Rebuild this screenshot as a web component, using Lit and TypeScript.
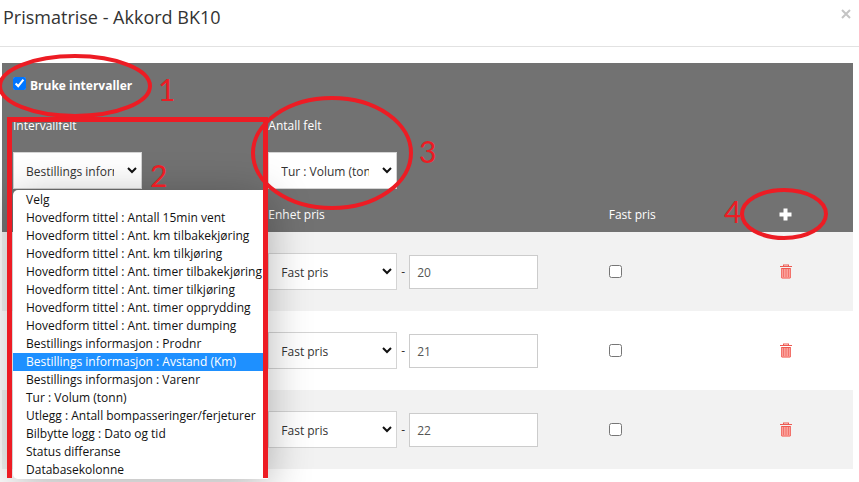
import { LitElement, html, css, svg } from "lit";
import { customElement, property, state } from "lit/decorators.js";

const FIELD_OPTIONS = [
  "Velg",
  "Hovedform tittel : Antall 15min vent",
  "Hovedform tittel : Ant. km tilbakekjøring",
  "Hovedform tittel : Ant. km tilkjøring",
  "Hovedform tittel : Ant. timer tilbakekjøring",
  "Hovedform tittel : Ant. timer tilkjøring",
  "Hovedform tittel : Ant. timer opprydding",
  "Hovedform tittel : Ant. timer dumping",
  "Bestillings informasjon : Prodnr",
  "Bestillings informasjon : Avstand (Km)",
  "Bestillings informasjon : Varenr",
  "Tur : Volum (tonn)",
  "Utlegg : Antall bompasseringer/ferjeturer",
  "Bilbytte logg : Dato og tid",
  "Status differanse",
  "Databasekolonne",
];

@customElement("price-select")
class PriceSelect extends LitElement {
  @property({ type: Array }) options: string[] = [];
  @property() value = "";
  @property() label = "";

  static styles = css`
    :host {
      display: inline-block;
      position: relative;
      width: 129px;
      vertical-align: top;
    }
    .select {
      display: block;
      box-sizing: border-box;
      width: 100%;
      height: 37px;
      margin: 0;
      padding: 2px 27px 0 12px;
      border: 1px solid #d4d4d4;
      border-radius: 0;
      background: #fff;
      color: #333;
      font: inherit;
      appearance: none;
    }
    .chevron {
      position: absolute;
      right: 5px;
      top: 14px;
      width: 10px;
      height: 8px;
      pointer-events: none;
    }
  `;

  render() {
    return html`
      <select class="select" aria-label=${this.label}>
        ${this.options.map(
          (o) => html`<option ?selected=${o === this.value}>${o}</option>`
        )}
      </select>
      <svg class="chevron" viewBox="0 0 10 8" aria-hidden="true">
        <path d="M1 2 L5 6 L9 2" fill="none" stroke="#111" stroke-width="2" />
      </svg>
    `;
  }
}

@customElement("tutorial-marks")
class TutorialMarks extends LitElement {
  static styles = css`
    :host {
      position: absolute;
      z-index: 2;
      left: 0;
      top: 0;
      pointer-events: none;
    }
    .marks {
      display: block;
      overflow: visible;
    }
    .line {
      fill: none;
      stroke: #ed1c24;
      stroke-width: 4;
    }
    .frame {
      stroke-width: 5;
    }
    .digit {
      fill: #ed1c24;
      font: 30px Lato, sans-serif;
    }
  `;

  render() {
    const ellipses = [
      [75, 86, 75, 30],
      [332, 153, 79, 55],
      [784, 214, 42, 24],
    ];
    const digits: [string, number, number][] = [
      ["1", 158, 101],
      ["2", 150, 187],
      ["3", 419, 163],
      ["4", 724, 223],
    ];
    return html`
      <svg class="marks" width="1" height="1">
        <path class="line frame" d="M9.5 478 V119.5 H265.5 V478" />
        ${ellipses.map(
          ([x, y, rx, ry]) =>
            svg`<ellipse class="line" cx=${x} cy=${y} rx=${rx} ry=${ry} />`
        )}
        ${digits.map(
          ([d, x, y]) => svg`<text class="digit" x=${x} y=${y}>${d}</text>`
        )}
      </svg>
    `;
  }
}

@customElement("app-root")
class AppRoot extends LitElement {
  @state() private rows = ["20", "21", "22"];

  static styles = css`
    :host {
      display: block;
      position: relative;
      height: 100vh;
      overflow: hidden;
      background: #fff;
      color: #333;
      font: 12px/18px "Open Sans", "Noto Sans", sans-serif;
    }
    .header {
      display: flex;
      justify-content: space-between;
      align-items: flex-start;
      box-sizing: border-box;
      height: 47px;
      padding: 4px 7px 0 3px;
      border-bottom: 1px solid #e2e2e2;
    }
    .title {
      margin: 0;
      font-size: 18px;
      line-height: 26px;
      font-weight: 400;
    }
    .icon-button {
      display: block;
      margin: 0;
      padding: 0;
      border: 0;
      background: none;
      line-height: 0;
    }
    .close {
      padding-top: 4px;
    }
    .body {
      padding: 16px 6px 0 2px;
    }
    .matrix {
      width: 100%;
      table-layout: fixed;
      border-collapse: collapse;
    }
    .col-field {
      width: 30%;
    }
    .col-unit {
      width: 40%;
    }
    .col-fixed {
      width: 20%;
    }
    .head {
      background: #727272;
      color: #fff;
    }
    .head th {
      padding: 0 11px;
      font-weight: 400;
      text-align: left;
      vertical-align: top;
    }
    .head .toggle-cell {
      height: 40px;
      padding-top: 14px;
    }
    .toggle {
      display: flex;
      gap: 4px;
      font-weight: 700;
    }
    .box {
      flex: none;
      width: 13px;
      height: 13px;
      margin: 0;
    }
    .field-label {
      display: block;
      margin-bottom: 17px;
    }
    .picker {
      position: relative;
      color: #333;
    }
    .menu {
      position: absolute;
      z-index: 1;
      left: 0;
      top: 38px;
      width: 255px;
      margin: 0;
      padding: 1px 0 0;
      list-style: none;
      background: #fff;
      border-radius: 5px 5px 0 5px;
      box-shadow: 0 8px 44px rgba(0, 0, 0, 0.3);
      color: #111;
      white-space: nowrap;
    }
    .option {
      padding-left: 13px;
      height: 18px;
      overflow: hidden;
    }
    .option.active {
      background: #1e90ff;
      color: #fff;
    }
    .head .caption {
      height: 35px;
      padding-top: 8px;
      vertical-align: middle;
    }
    .row {
      height: 79px;
    }
    .row:nth-child(odd) {
      background: #f2f2f2;
    }
    .row td {
      padding: 0 11px;
    }
    .price {
      display: flex;
      align-items: center;
      gap: 4px;
    }
    .amount {
      box-sizing: border-box;
      width: 129px;
      height: 34px;
      margin: 0;
      padding: 2px 8px 0 7px;
      border: 1px solid #ccc;
      border-radius: 0;
      background: #fff;
      color: #555;
      font: inherit;
    }
    .row .box {
      display: block;
    }
  `;

  render() {
    return html`
      <header class="header">
        <h1 class="title">Prismatrise - Akkord BK10</h1>
        <button class="icon-button close" aria-label="Lukk">
          <svg width="12" height="12" viewBox="0 0 12 12">
            <path d="M2 2 L10 10 M10 2 L2 10" stroke="#c4c4c4" stroke-width="2" />
          </svg>
        </button>
      </header>
      <main class="body">
        <table class="matrix">
          <colgroup>
            <col class="col-field" />
            <col class="col-unit" />
            <col class="col-fixed" />
            <col />
          </colgroup>
          <thead class="head">
            <tr>
              <th class="toggle-cell" colspan="4">
                <label class="toggle">
                  <input class="box" type="checkbox" checked />
                  Bruke intervaller
                </label>
              </th>
            </tr>
            <tr>
              <th>
                <span class="field-label">Intervallfelt</span>
                <div class="picker">
                  <price-select
                    label="Intervallfelt"
                    .options=${FIELD_OPTIONS}
                    value="Bestillings informasjon : Avstand (Km)"
                  ></price-select>
                  <ul class="menu" role="listbox" aria-label="Intervallfelt">
                    ${FIELD_OPTIONS.map(
                      (o, i) => html`<li
                        class="option ${i === 9 ? "active" : ""}"
                        role="option"
                        aria-selected=${i === 9 ? "true" : "false"}
                      >${o}</li>`
                    )}
                  </ul>
                </div>
              </th>
              <th>
                <span class="field-label">Antall felt</span>
                <price-select
                  label="Antall felt"
                  .options=${FIELD_OPTIONS}
                  value="Tur : Volum (tonn)"
                ></price-select>
              </th>
              <th></th>
              <th></th>
            </tr>
            <tr>
              <th class="caption"></th>
              <th class="caption">Enhet pris</th>
              <th class="caption">Fast pris</th>
              <th class="caption">
                <button class="icon-button" aria-label="Legg til rad">
                  <svg width="13" height="13" viewBox="0 0 13 13">
                    <path d="M4.5 0.5 H8.5 V4.5 H12.5 V8.5 H8.5 V12.5 H4.5 V8.5 H0.5 V4.5 H4.5 Z" fill="#fff" />
                  </svg>
                </button>
              </th>
            </tr>
          </thead>
          <tbody>
            ${this.rows.map(
              (amount) => html`<tr class="row">
                <td></td>
                <td>
                  <div class="price">
                    <price-select
                      label="Enhet pris"
                      .options=${["Fast pris"]}
                      value="Fast pris"
                    ></price-select>
                    <span>-</span>
                    <input class="amount" aria-label="Pris" .value=${amount} />
                  </div>
                </td>
                <td><input class="box" type="checkbox" aria-label="Fast pris" /></td>
                <td>
                  <button class="icon-button" aria-label="Slett rad">
                    <svg width="14" height="15" viewBox="0 0 14 15">
                      <path d="M2 4 H12 V13.5 Q12 14.5 11 14.5 H3 Q2 14.5 2 13.5 Z" fill="#fba19b" />
                      <path d="M1 2.5 H13 M4 1 H10 M4.5 1 V2.5 M9.5 1 V2.5 M2 4.5 H12" stroke="#ee5a52" fill="none" />
                      <path d="M2.5 4 V14 M4.5 5 V13 M7 5 V13 M9.5 5 V13 M11.5 4 V14 M3 14 H11" stroke="#f2726b" fill="none" />
                    </svg>
                  </button>
                </td>
              </tr>`
            )}
          </tbody>
        </table>
      </main>
      <tutorial-marks></tutorial-marks>
    `;
  }
}
